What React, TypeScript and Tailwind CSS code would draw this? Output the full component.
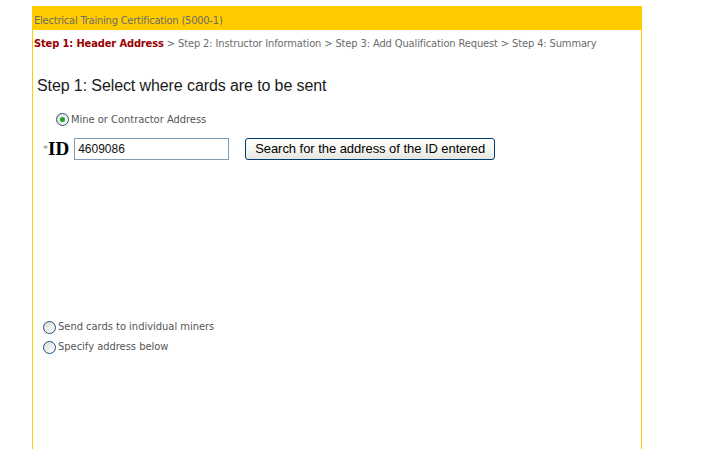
export default function App() {
  const tahoma = { fontFamily: '"DejaVu Sans Condensed", "DejaVu Sans", sans-serif' };
  return (
    <div className="w-[711px] h-[449px] overflow-hidden bg-white font-['Liberation_Sans',Arial,sans-serif]">
      <div className="ml-[32px] mt-[6px] w-[610px] h-[443px] border-x border-[#ffcc00] flex flex-col">
        {/* header bar */}
        <div className="-mx-px h-[24px] bg-[#ffcc00] flex items-center pl-[2px] pt-[7px] text-[11px] tracking-[-0.2px] text-[#6b6b6b] font-['DejaVu_Sans_Condensed','DejaVu_Sans',sans-serif]">
          Electrical Training Certification (5000-1)
        </div>

        {/* breadcrumb */}
        <div className="pl-[1px] mt-[7px] text-[11px] leading-[14px] tracking-[-0.12px] text-[#6b6b6b] whitespace-nowrap" style={tahoma}>
          <span className="font-bold text-[#990000]">Step 1: Header Address</span>
          {' > Step 2: Instructor Information > Step 3: Add Qualification Request > Step 4: Summary'}
        </div>

        <h2 className="ml-[4px] mt-[25px] text-[16px] leading-[20px] tracking-[-0.1px] text-[#1a1a1a]">
          Step 1: Select where cards are to be sent
        </h2>

        {/* mine or contractor */}
        <label className="ml-[23px] mt-[14px] flex items-center gap-[2px] text-[11px] text-[#555]" style={tahoma}>
          <span className="w-[13px] h-[13px] rounded-full border border-[#1c5180] bg-gradient-to-br from-[#dcdcd7] to-white flex items-center justify-center">
            <span className="w-[5px] h-[5px] rounded-full bg-[#21a121]" />
          </span>
          <span className="mt-[2px]">Mine or Contractor Address</span>
        </label>

        {/* ID row */}
        <div className="mt-[9px] flex items-center h-[22px]">
          <span className="ml-[10px] text-[10px] text-[#888] font-['Liberation_Serif',serif] self-start mt-[3px]">*</span>
          <span className="font-['Liberation_Serif',serif] font-bold text-[19px] text-black leading-none">ID</span>
          <div className="ml-[5px] w-[155px] h-[22px] border border-[#7f9db9] flex items-center px-[3px] text-[12px] text-[#111]">
            4609086
          </div>
          <button className="ml-[16px] w-[250px] h-[22px] rounded-[3px] border border-[#003c74] bg-gradient-to-b from-white via-[#f6f6f2] to-[#e6e5de] text-[13px] tracking-[-0.05px] text-black">
            Search for the address of the ID entered
          </button>
        </div>

        <div className="h-[158px]" />

        <label className="ml-[10px] flex items-center gap-[2px] text-[11px] text-[#555] h-[20px]" style={tahoma}>
          <span className="w-[13px] h-[13px] rounded-full border border-[#1c5180] bg-gradient-to-br from-[#dcdcd7] to-white" />
          Send cards to individual miners
        </label>
        <label className="ml-[10px] flex items-center gap-[2px] text-[11px] text-[#555] h-[20px]" style={tahoma}>
          <span className="w-[13px] h-[13px] rounded-full border border-[#1c5180] bg-gradient-to-br from-[#dcdcd7] to-white" />
          Specify address below
        </label>
      </div>
    </div>
  );
}
